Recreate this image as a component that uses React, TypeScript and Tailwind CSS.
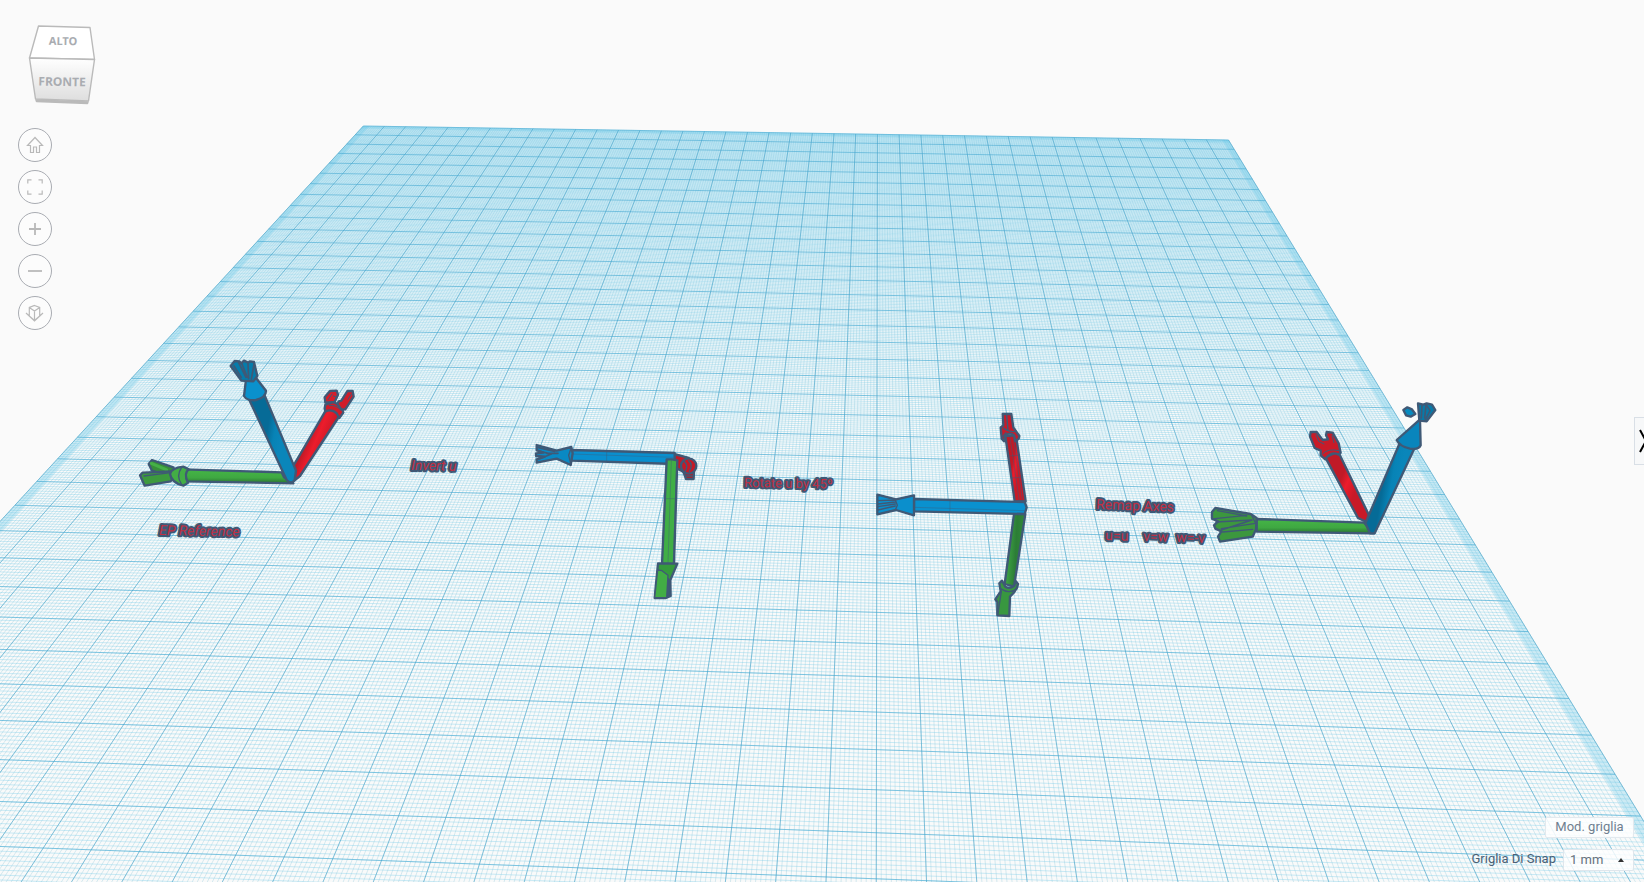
import type { ReactNode } from "react";

const COLS = 40;
const ROWS = 38;

/** Projects a point of the work plane, in grid cells, onto the view. */
function project(m: number, n: number): string {
  const w = 1 - 0.000597 * m - 0.01552 * n;
  const x = (20.896 * m - 13.63 * n + 363.3) / w;
  const y = (0.2664 * m + 6.745 * n + 126) / w;
  return `${x.toFixed(1)} ${y.toFixed(1)}`;
}

const quad = (m0: number, n0: number, m1: number, n1: number) =>
  `M${project(m0, n0)}L${project(m1, n0)}L${project(m1, n1)}L${project(m0, n1)}Z`;

function columnLines(step: number): string {
  let d = "";
  for (let i = 0; i <= COLS * step; i++) d += `M${project(i / step, 0)}L${project(i / step, ROWS)}`;
  return d;
}

function rowLines(step: number): string {
  let d = "";
  for (let i = 0; i <= ROWS * step; i++) d += `M${project(0, i / step)}L${project(COLS, i / step)}`;
  return d;
}

function WorkPlane() {
  return (
    <g fill="none">
      <path d={quad(0, 0, COLS, ROWS)} fill="#f9fafa" />
      <path d={quad(0, 0, COLS, ROWS)} fill="url(#planeDepth)" />
      <path d={columnLines(10)} stroke="#8cc6da" strokeWidth="1" opacity="0.34" />
      <path d={rowLines(10)} stroke="#74cbea" strokeWidth="1" opacity="0.37" />
      <path d={quad(0, 0, COLS, 0.3)} fill="#62c6e8" opacity="0.3" />
      <path d={quad(0, 0, 0.28, ROWS)} fill="#62c6e8" opacity="0.3" />
      <path d={quad(COLS - 0.28, 0, COLS, ROWS)} fill="#62c6e8" opacity="0.3" />
      <path d={columnLines(1)} stroke="#3d9cc4" strokeWidth="1" opacity="0.55" />
      <path d={rowLines(1)} stroke="#3fa5cf" strokeWidth="1" opacity="0.55" />
    </g>
  );
}

function Solid({ x, y, children }: { x: number; y: number; children: ReactNode }) {
  return (
    <g transform={`translate(${x} ${y}) scale(0.33333)`} stroke="#3f5976" strokeWidth="7" strokeLinejoin="round" strokeLinecap="round">
      {children}
    </g>
  );
}

function ReferenceAxes() {
  return (
    <Solid x={120} y={340}>
      <path d="M520 378L624 200L662 222L540 408L515 428Z" fill="url(#redAcross)" />
      <path d="M614 206L616 194L640 186Q668 198 670 218L658 234L650 220Q636 206 616 214Z" fill="#d01c29" />
      <path d="M616 188L614 172L630 153L650 152L654 164L644 186Z" fill="#d61d2a" />
      <path d="M656 184L664 182L682 153L698 153L701 170L676 208L664 208L652 192Z" fill="#d01c29" />
      <path d="M636 162L624 180M640 168L646 170M684 178L694 162M628 196Q650 194 664 212" fill="none" strokeWidth="3" />
      <path d="M190 388L485 397L492 412L520 430L190 424Z" fill="url(#greenDown)" />
      <path d="M86 372L96 360L160 382L170 402L130 404L96 392Z" fill="#388e3a" />
      <path d="M94 370L140 390" fill="none" stroke="#45b047" strokeWidth="9" />
      <path d="M60 406L68 398L156 394L162 412L152 424L74 437Z" fill="#3c9a3e" />
      <path d="M72 408L152 398" fill="none" strokeWidth="4" />
      <path d="M150 402Q154 384 190 380L206 388Q190 400 204 428L190 437Q154 428 150 402Z" fill="#43ad45" />
      <path d="M184 384Q168 406 184 432" fill="none" strokeWidth="4" />
      <path d="M388 180L434 166L528 392L524 420Q514 434 500 420Z" fill="url(#blueAcross)" />
      <path d="M372 168L378 118L410 116L438 152Q438 172 408 180Q382 184 372 168Z" fill="#0a91cc" />
      <path d="M332 78L344 63L358 64L364 70L372 62L384 68L390 64L402 66L412 108L400 124L364 122Z" fill="#057cab" />
      <path d="M342 78L364 112M356 68L378 112M366 72L382 112M384 72L386 116M402 72L394 118" fill="none" strokeWidth="5" />
    </Solid>
  );
}

function InvertedAxes() {
  return (
    <Solid x={510} y={400}>
      <path d="M520 214L552 214L551 237L528 237Z" fill="#b81823" />
      <path d="M492 162L536 174L526 218L494 202Z" fill="#c41a27" />
      <circle cx="536" cy="198" r="23" fill="#c41a27" />
      <path d="M536 182Q550 194 538 214M522 184Q536 196 526 214M528 228L548 228" fill="none" strokeWidth="4" />
      <path d="M184 150L494 159L494 192L184 182Z" fill="#0a8fce" />
      <path d="M184 162L490 172M290 154L290 184" fill="none" strokeWidth="2" opacity="0.6" />
      <path d="M80 135L140 152L184 141L188 160L182 195L140 176L80 188L80 178L104 170L78 168L78 160L100 158L80 150Z" fill="#0989c4" />
      <path d="M82 142L134 154M80 152L124 162L80 180M110 160L144 160" fill="none" strokeWidth="5" />
      <path d="M184 142L176 166L183 194" fill="none" strokeWidth="4" />
      <path d="M470 178L486 178L502 181L492 492L456 492Z" fill="#40ae46" />
      <path d="M484 182L474 488M500 184L490 490M468 296L498 296" fill="none" strokeWidth="2" opacity="0.6" />
      <path d="M444 490L502 491L481 540L482 588L468 594L434 594Z" fill="#359a3d" />
      <path d="M470 530L480 540L480 588L470 592Z" fill="#3f5976" strokeWidth="3" />
      <path d="M443 510L456 512L474 526L470 593L434 593Z" fill="#42ad45" strokeWidth="4" />
    </Solid>
  );
}

function RotatedAxes() {
  return (
    <Solid x={850} y={400}>
      <path d="M492 342L526 342L492 560L464 552Z" fill="url(#greenAcross)" />
      <path d="M466 108L498 106L527 304L494 304Z" fill="url(#redAcross)" />
      <path d="M480 112L508 304M490 112L518 304M476 168L504 166M484 234L514 232" fill="none" strokeWidth="2" opacity="0.7" />
      <path d="M458 42L484 42L490 82L508 108L506 116Q500 122 496 124L492 106Q480 96 466 106L462 124L455 116L452 82L460 76Z" fill="#c71b2a" />
      <path d="M470 46L474 92M460 84Q478 98 496 94M456 112L468 98" fill="none" strokeWidth="4" />
      <path d="M192 297L524 306L530 322L524 342L192 334Z" fill="#0a91cf" />
      <path d="M192 322L522 332M300 302L300 334" fill="none" strokeWidth="2" opacity="0.6" />
      <path d="M82 284L138 298L192 286L192 346L138 330L82 343Z" fill="#0b8fcc" />
      <path d="M84 302L136 300M84 312L136 306M84 320L136 312M84 330L136 318M136 300L142 316L136 330" fill="none" strokeWidth="4" />
      <path d="M448 550L456 542L466 560Q478 568 492 558L498 544L504 552Q502 570 480 590L478 648L442 646L442 606L436 598L452 574Z" fill="#389740" />
      <path d="M452 566Q478 584 500 566M454 574L444 640" fill="none" strokeWidth="4" />
    </Solid>
  );
}

function RemappedAxes() {
  return (
    <Solid x={1080} y={390}>
      <path d="M736 202L774 184L868 378L864 398L834 384Z" fill="url(#redAcross)" />
      <path d="M690 140L692 126L710 126L728 150L744 148L738 136L740 126L758 128L776 160L782 188L776 194Q752 182 736 208L722 196L722 182L704 174Z" fill="#c91b28" />
      <path d="M708 134L716 154L732 162M756 136L762 158M728 192Q742 174 778 182" fill="none" strokeWidth="3" />
      <path d="M530 387L852 398L882 430L530 425Z" fill="url(#greenDown)" />
      <path d="M396 366L406 354L512 372L530 384L528 418L518 440L420 455L414 440L424 424L406 416L402 406L414 394L396 386Z" fill="#3c973e" />
      <path d="M404 386L500 376M408 396L516 390L424 420M424 416L526 400M412 362L500 378M428 426L518 418M514 374L526 398" fill="none" strokeWidth="4" />
      <path d="M958 162L1002 178L884 430L870 430L856 400Z" fill="url(#blueAcross)" />
      <path d="M950 150L1020 88L1022 166Q1016 180 990 176Q960 170 950 150Z" fill="#0985bc" />
      <path d="M970 60L982 52L996 58L1006 72L992 80L978 76Z" fill="#078bc0" />
      <path d="M1014 40L1030 44L1040 40L1056 44L1066 60L1040 94L1018 92Z" fill="#067aa9" />
      <path d="M1026 46L1024 84M1038 46L1034 84M1040 46L1050 62L1036 90" fill="none" strokeWidth="5" />
    </Solid>
  );
}

function PlaneLabel({ x, y, size, tilt, children }: { x: number; y: number; size: string; tilt: number; children: string }) {
  return (
    <text
      x={x}
      y={y}
      transform={`rotate(${tilt} ${x} ${y})`}
      className={`font-['Roboto',sans-serif] ${size}`}
      fill="#c22f42"
      stroke="#3f5976"
      strokeWidth="4"
      strokeLinejoin="round"
      paintOrder="stroke"
    >
      {children}
    </text>
  );
}

function Scene() {
  return (
    <svg
      viewBox="0 0 1644 882"
      preserveAspectRatio="xMidYMid slice"
      className="col-start-1 row-start-1 block h-screen w-full"
      role="img"
      aria-label="Work plane"
    >
      <defs>
        <linearGradient id="planeDepth" gradientUnits="userSpaceOnUse" x1="0" y1="126" x2="0" y2="380">
          <stop offset="0" stopColor="#7fd0ee" stopOpacity="0.2" />
          <stop offset="1" stopColor="#7fd0ee" stopOpacity="0" />
        </linearGradient>
        <linearGradient id="greenDown" x1="0" y1="0" x2="0" y2="1">
          <stop offset="0.2" stopColor="#43b145" />
          <stop offset="0.6" stopColor="#3fa842" />
          <stop offset="1" stopColor="#2a7331" />
        </linearGradient>
        <linearGradient id="greenAcross" x1="0" y1="0" x2="1" y2="0.15">
          <stop offset="0.2" stopColor="#3da343" />
          <stop offset="0.6" stopColor="#2c7d36" />
          <stop offset="1" stopColor="#318a3a" />
        </linearGradient>
        <linearGradient id="redAcross" x1="0.35" y1="0.4" x2="0.65" y2="0.6">
          <stop offset="0" stopColor="#c01a27" />
          <stop offset="0.4" stopColor="#ed1c2b" />
          <stop offset="1" stopColor="#c81a28" />
        </linearGradient>
        <linearGradient id="blueAcross" x1="0.35" y1="0.5" x2="0.65" y2="0.6">
          <stop offset="0" stopColor="#066b97" />
          <stop offset="0.5" stopColor="#0783b6" />
          <stop offset="1" stopColor="#0a86ba" />
        </linearGradient>
      </defs>
      <WorkPlane />
      <ReferenceAxes />
      <InvertedAxes />
      <RotatedAxes />
      <RemappedAxes />
      <PlaneLabel x={159} y={535} size="text-[14px] italic" tilt={1}>EP Reference</PlaneLabel>
      <PlaneLabel x={411} y={470} size="text-[14px] italic" tilt={1}>Invert u</PlaneLabel>
      <PlaneLabel x={744} y={487} size="text-[13px]" tilt={1}>Rotate u by 45º</PlaneLabel>
      <PlaneLabel x={1096} y={509} size="text-[14px]" tilt={2}>Remap Axes</PlaneLabel>
      <PlaneLabel x={1105} y={540} size="text-[14px]" tilt={2}>u=u</PlaneLabel>
      <PlaneLabel x={1143} y={541} size="text-[14px]" tilt={2}>v=w</PlaneLabel>
      <PlaneLabel x={1176} y={542} size="text-[14px]" tilt={2}>w=-v</PlaneLabel>
    </svg>
  );
}

function ViewCube() {
  return (
    <button type="button" aria-label="View cube" className="ml-2 block">
      <svg width="72" height="84" viewBox="0 0 72 84" className="block">
        <defs>
          <linearGradient id="cubeFront" x1="0" y1="0" x2="0" y2="1">
            <stop offset="0" stopColor="#ffffff" />
            <stop offset="1" stopColor="#dedede" />
          </linearGradient>
        </defs>
        <g stroke="#bababa" strokeWidth="1.4" strokeLinejoin="round">
          <path d="M10 76L62 78L61.500 79.500L10.500 77.500Z" fill="#b5b5b5" />
          <path d="M12.500 2L64 3.500L68.500 35.500L3.500 34Z" fill="#ffffff" />
          <path d="M3.500 34L68.500 35.500L62.500 77L9.500 75Z" fill="url(#cubeFront)" />
        </g>
        <g fill="#a9acb1" className="font-['Noto_Sans',sans-serif] font-bold">
          <text x="37" y="21" textAnchor="middle" transform="rotate(1 37 21)" className="text-[11px]">ALTO</text>
          <text x="36" y="62" textAnchor="middle" transform="rotate(1 36 62)" className="text-[12px]">FRONTE</text>
        </g>
      </svg>
    </button>
  );
}

function ViewButton({ label, children }: { label: string; children: ReactNode }) {
  return (
    <button
      type="button"
      aria-label={label}
      className="flex size-[34px] items-center justify-center rounded-full border border-[#a9acb2] bg-[#fcfcfc] text-[#b9b9b9]"
    >
      <svg width="20" height="20" viewBox="0 0 20 20" fill="none" stroke="currentColor" strokeWidth="1.200">
        {children}
      </svg>
    </button>
  );
}

export default function App() {
  return (
    <main className="grid h-screen overflow-hidden bg-[#fafafa] font-['Roboto','Noto_Sans',sans-serif]">
      <Scene />
      <div className="z-10 col-start-1 row-start-1 flex items-stretch justify-between">
        <nav aria-label="Vista" className="flex flex-col items-start pt-6 pl-[18px]">
          <ViewCube />
          <div className="flex flex-col gap-2 pt-5">
            <ViewButton label="Vista iniziale">
              <path d="M10 2.500L2.500 10.500H5.500V17.500H8.500V12H11.500V17.500H14.500V10.500H17.500Z" />
            </ViewButton>
            <ViewButton label="Adatta alla vista">
              <path d="M2.800 6.500V2.800H6.500M13.500 2.800H17.200V6.500M17.200 13.500V17.200H13.500M6.500 17.200H2.800V13.500" />
            </ViewButton>
            <ViewButton label="Zoom avanti">
              <path d="M10 4V16M4 10H16" strokeWidth="1.800" />
            </ViewButton>
            <ViewButton label="Zoom indietro">
              <path d="M3 10H17" strokeWidth="1.800" />
            </ViewButton>
            <ViewButton label="Vista ortogonale">
              <path d="M9.500 2.500L14.700 4.500V13L9.500 17.500L4.300 13V4.500ZM4.300 4.500L9.500 8L14.700 4.500M9.500 8V17.500M1 10L9.500 18L18 10" />
            </ViewButton>
          </div>
        </nav>

        <div className="flex flex-col items-end">
          <div className="flex flex-1 items-center">
            <button
              type="button"
              aria-label="Apri pannello"
              className="h-12 w-[10px] overflow-hidden border-y border-l border-[#d9dfe6] bg-[#f7f8f9]"
            >
              <svg width="10" height="46" viewBox="0 0 10 46" fill="none" stroke="#000000" strokeWidth="2">
                <path d="M5 12L11 23L5 34" />
              </svg>
            </button>
          </div>
          <div className="absolute right-[10px] bottom-[11px] flex flex-col items-end gap-[11px]">
            <button
              type="button"
              className="flex h-[21px] w-[89px] items-center justify-center rounded-xs border border-[#e3e9ee] bg-white/85 pb-0.5 text-[13px] text-[#6f7f90]"
            >
              Mod. griglia
            </button>
            <div className="flex items-center gap-[7px]">
              <label htmlFor="snap" className="pb-0.5 text-[13px] leading-5 text-[#4a6075]">
                Griglia Di Snap
              </label>
              <div className="grid items-center">
                <select
                  id="snap"
                  defaultValue="1"
                  className="col-start-1 row-start-1 h-[22px] w-[71px] appearance-none rounded-xs border border-[#dfe6ec] bg-white/80 pl-1.5 text-[13px] text-[#66717c]"
                >
                  <option value="1">1 mm</option>
                </select>
                <svg width="6" height="4" viewBox="0 0 6 4" className="pointer-events-none col-start-1 row-start-1 mr-2.5 justify-self-end">
                  <path d="M3 0L6 4H0Z" fill="#333333" />
                </svg>
              </div>
            </div>
          </div>
        </div>
      </div>
    </main>
  );
}
